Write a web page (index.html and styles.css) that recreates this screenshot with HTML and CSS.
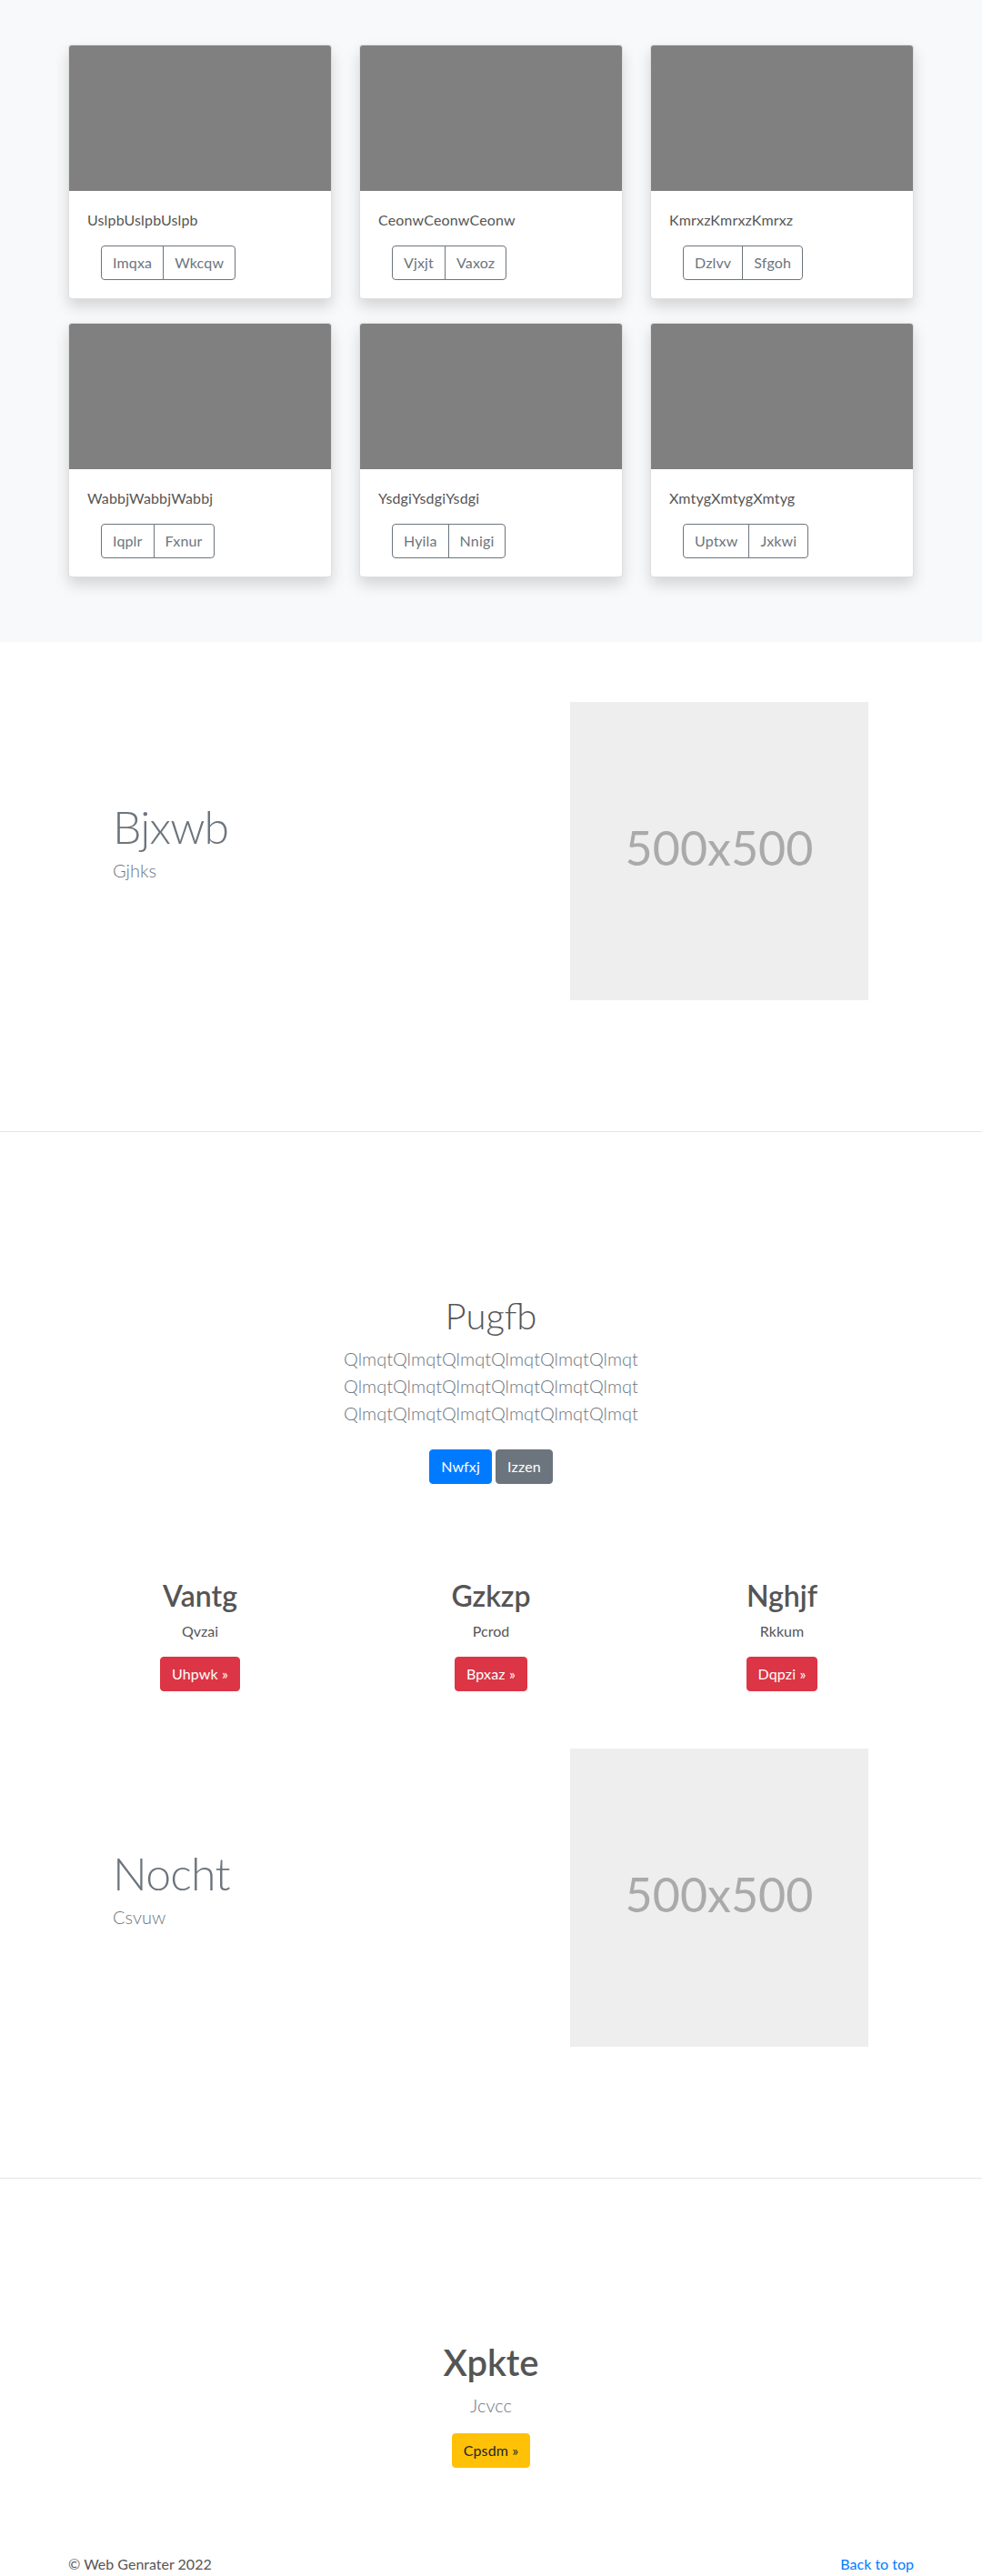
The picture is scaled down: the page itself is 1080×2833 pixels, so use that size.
FILE: index.html
```html
<!DOCTYPE html>
<html lang="en">
<head>
<meta charset="utf-8">
<title>Album</title>
<link rel="stylesheet" href="styles.css">
</head>
<body>
<main>
  <section class="album">
    <div class="container">
      <div class="card-grid">
        <div class="card">
          <div class="card-img"></div>
          <div class="card-body">
            <p class="card-text">UslpbUslpbUslpb</p>
            <div class="btn-group"><button type="button" class="btn btn-outline">Imqxa</button><button type="button" class="btn btn-outline">Wkcqw</button></div>
          </div>
        </div>
        <div class="card">
          <div class="card-img"></div>
          <div class="card-body">
            <p class="card-text">CeonwCeonwCeonw</p>
            <div class="btn-group"><button type="button" class="btn btn-outline">Vjxjt</button><button type="button" class="btn btn-outline">Vaxoz</button></div>
          </div>
        </div>
        <div class="card">
          <div class="card-img"></div>
          <div class="card-body">
            <p class="card-text">KmrxzKmrxzKmrxz</p>
            <div class="btn-group"><button type="button" class="btn btn-outline">Dzlvv</button><button type="button" class="btn btn-outline">Sfgoh</button></div>
          </div>
        </div>
        <div class="card">
          <div class="card-img"></div>
          <div class="card-body">
            <p class="card-text">WabbjWabbjWabbj</p>
            <div class="btn-group"><button type="button" class="btn btn-outline">Iqplr</button><button type="button" class="btn btn-outline">Fxnur</button></div>
          </div>
        </div>
        <div class="card">
          <div class="card-img"></div>
          <div class="card-body">
            <p class="card-text">YsdgiYsdgiYsdgi</p>
            <div class="btn-group"><button type="button" class="btn btn-outline">Hyila</button><button type="button" class="btn btn-outline">Nnigi</button></div>
          </div>
        </div>
        <div class="card">
          <div class="card-img"></div>
          <div class="card-body">
            <p class="card-text">XmtygXmtygXmtyg</p>
            <div class="btn-group"><button type="button" class="btn btn-outline">Uptxw</button><button type="button" class="btn btn-outline">Jxkwi</button></div>
          </div>
        </div>
      </div>
    </div>
  </section>

  <section class="featurette">
    <div class="container feature-row">
      <div class="feature-text">
        <h2 class="feature-heading">Bjxwb</h2>
        <p class="lead">Gjhks</p>
      </div>
      <svg class="placeholder" width="328" height="328" viewBox="0 0 328 328" role="img" aria-label="500x500"><rect width="328" height="328" fill="#eeeeee"/><text class="ph-text" x="164" y="164" dy=".3em" text-anchor="middle">500x500</text></svg>
    </div>
  </section>
  <hr class="divider">

  <section class="hero">
    <div class="container">
      <h1 class="hero-title">Pugfb</h1>
      <p class="lead hero-lead">QlmqtQlmqtQlmqtQlmqtQlmqtQlmqt<br>QlmqtQlmqtQlmqtQlmqtQlmqtQlmqt<br>QlmqtQlmqtQlmqtQlmqtQlmqtQlmqt</p>
      <p class="hero-actions"><a href="#" class="btn btn-primary">Nwfxj</a> <a href="#" class="btn btn-secondary">Izzen</a></p>
    </div>
    <div class="marketing">
      <div class="mk-col">
        <h2 class="mk-title">Vantg</h2>
        <p class="mk-text">Qvzai</p>
        <a href="#" class="btn btn-danger">Uhpwk »</a>
      </div>
      <div class="mk-col">
        <h2 class="mk-title">Gzkzp</h2>
        <p class="mk-text">Pcrod</p>
        <a href="#" class="btn btn-danger">Bpxaz »</a>
      </div>
      <div class="mk-col">
        <h2 class="mk-title">Nghjf</h2>
        <p class="mk-text">Rkkum</p>
        <a href="#" class="btn btn-danger">Dqpzi »</a>
      </div>
    </div>
  </section>

  <section class="featurette featurette-second">
    <div class="container feature-row">
      <div class="feature-text">
        <h2 class="feature-heading">Nocht</h2>
        <p class="lead">Csvuw</p>
      </div>
      <svg class="placeholder" width="328" height="328" viewBox="0 0 328 328" role="img" aria-label="500x500"><rect width="328" height="328" fill="#eeeeee"/><text class="ph-text" x="164" y="164" dy=".3em" text-anchor="middle">500x500</text></svg>
    </div>
  </section>
  <hr class="divider">

  <section class="cta">
    <div class="container">
      <h1 class="cta-title">Xpkte</h1>
      <p class="lead cta-lead">Jcvcc</p>
      <a href="#" class="btn btn-warning">Cpsdm »</a>
    </div>
  </section>
</main>

<footer class="footer">
  <div class="container footer-row">
    <p class="footer-copy">© Web Genrater 2022</p>
    <p class="footer-top"><a href="#">Back to top</a></p>
  </div>
</footer>
</body>
</html>
```

FILE: styles.css
```css
* {
  box-sizing: border-box;
}

html,
body {
  margin: 0;
  padding: 0;
}

body {
  font-family: "Segoe UI", Lato, "Liberation Sans", sans-serif;
  font-size: 16px;
  line-height: 1.5;
  color: #555555;
  background: #ffffff;
}

.container {
  width: 960px;
  margin: 0 auto;
  padding: 0 15px;
}

/* ---------- album ---------- */
.album {
  background: #f8f9fa;
  padding: 49px 0 71px;
}

.card-grid {
  display: grid;
  grid-template-columns: repeat(3, 290px);
  column-gap: 30px;
  row-gap: 26px;
}

.card {
  background: #ffffff;
  border: 1px solid rgba(0, 0, 0, 0.125);
  border-radius: 4px;
  box-shadow: 0 8px 16px rgba(0, 0, 0, 0.15);
  overflow: hidden;
}

.card-img {
  height: 160px;
  background: #808080;
}

.card-body {
  padding: 20px;
}

.card-text {
  margin: 0 0 16px;
  line-height: 24px;
  letter-spacing: 0.15px;
}

.btn-group {
  display: inline-flex;
  margin-left: 15px;
}

/* ---------- buttons ---------- */
.btn {
  display: inline-block;
  font-family: inherit;
  font-size: 16px;
  font-weight: 400;
  line-height: 24px;
  padding: 6px 12px;
  border: 1px solid transparent;
  border-radius: 4px;
  text-decoration: none;
  vertical-align: middle;
  cursor: pointer;
  letter-spacing: 0.15px;
}

.btn-outline {
  color: #6c757d;
  border-color: #6c757d;
  background: transparent;
}

.btn-group .btn:first-child {
  border-top-right-radius: 0;
  border-bottom-right-radius: 0;
}

.btn-group .btn + .btn {
  margin-left: -1px;
  border-top-left-radius: 0;
  border-bottom-left-radius: 0;
}

.btn-primary {
  color: #ffffff;
  background: #007bff;
  border-color: #007bff;
}

.btn-secondary {
  color: #ffffff;
  background: #6c757d;
  border-color: #6c757d;
}

.btn-danger {
  color: #ffffff;
  background: #dc3545;
  border-color: #dc3545;
}

.btn-warning {
  color: #212529;
  background: #ffc107;
  border-color: #ffc107;
}

/* ---------- featurette ---------- */
.featurette {
  padding: 66px 0 144px;
}

.featurette-second {
  padding-top: 63px;
}

.feature-row {
  display: flex;
  align-items: center;
}

.feature-text {
  flex: 1;
  padding-left: 49px;
}

.feature-heading {
  margin: 0 0 8px;
  font-size: 50px;
  font-weight: 300;
  line-height: 1;
  letter-spacing: -0.8px;
  color: #6c757d;
}

.lead {
  margin: 0 0 16px;
  font-size: 20px;
  font-weight: 300;
  line-height: 30px;
  color: #6c757d;
}

.placeholder {
  display: block;
  flex: none;
  width: 328px;
  height: 328px;
  margin-right: 50px;
}

.ph-text {
  fill: #aaaaaa;
  font-size: 52px;
}

.divider {
  margin: 0;
  border: 0;
  border-top: 1px solid rgba(0, 0, 0, 0.1);
  height: 0;
}

/* ---------- hero ---------- */
.hero {
  text-align: center;
  padding-top: 178px;
}

.hero-title {
  margin: 0 0 8px;
  font-size: 40px;
  font-weight: 300;
  line-height: 48px;
  color: #555555;
}

.hero-lead {
  margin-bottom: 23px;
}

.hero-actions {
  margin: 0;
  line-height: 38px;
}

/* ---------- marketing ---------- */
.marketing {
  width: 960px;
  margin: 104px auto 0;
  display: grid;
  grid-template-columns: repeat(3, 320px);
}

.mk-col {
  padding: 0 15px;
  text-align: center;
}

.mk-title {
  margin: 0 0 8px;
  font-size: 32px;
  font-weight: 600;
  line-height: 38.4px;
  color: #555555;
}

.mk-text {
  margin: 0 0 16px;
}

/* ---------- cta ---------- */
.cta {
  text-align: center;
  padding-top: 178px;
}

.cta-title {
  margin: 0 0 8px;
  font-size: 40px;
  font-weight: 600;
  line-height: 48px;
  color: #555555;
}

/* ---------- footer ---------- */
.footer {
  padding: 94px 0 2px;
}

.footer-row {
  display: flex;
  justify-content: space-between;
}

.footer-row p {
  margin: 0;
}

.footer-top a {
  color: #007bff;
  text-decoration: none;
}
```
